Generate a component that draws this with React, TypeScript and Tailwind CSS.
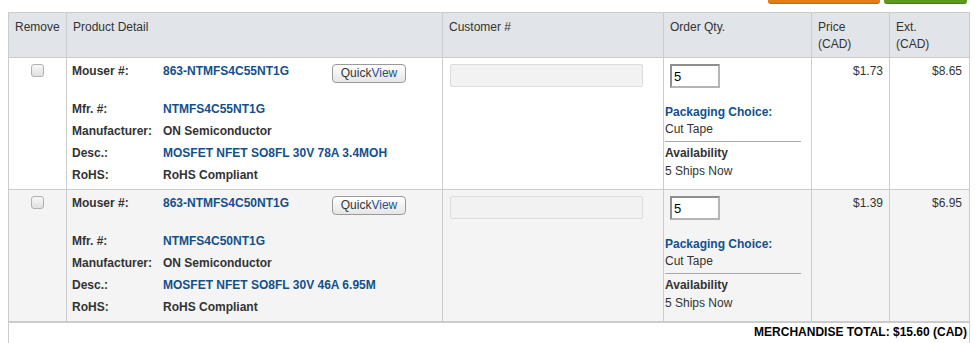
import React from 'react';

interface CartLine {
  mouserNo: string;
  mfrNo: string;
  manufacturer: string;
  desc: string;
  rohs: string;
  qty: string;
  packaging: string;
  availability: string;
  price: string;
  ext: string;
}

const lines: CartLine[] = [
  {
    mouserNo: '863-NTMFS4C55NT1G',
    mfrNo: 'NTMFS4C55NT1G',
    manufacturer: 'ON Semiconductor',
    desc: 'MOSFET NFET SO8FL 30V 78A 3.4MOH',
    rohs: 'RoHS Compliant',
    qty: '5',
    packaging: 'Cut Tape',
    availability: '5 Ships Now',
    price: '$1.73',
    ext: '$8.65',
  },
  {
    mouserNo: '863-NTMFS4C50NT1G',
    mfrNo: 'NTMFS4C50NT1G',
    manufacturer: 'ON Semiconductor',
    desc: 'MOSFET NFET SO8FL 30V 46A 6.95M',
    rohs: 'RoHS Compliant',
    qty: '5',
    packaging: 'Cut Tape',
    availability: '5 Ships Now',
    price: '$1.39',
    ext: '$6.95',
  },
];

function DetailRow({ label, children }: { label: string; children: React.ReactNode }) {
  return (
    <div className="flex items-center h-[22px]">
      <span className="w-[91px] font-bold text-[#333]">{label}</span>
      {children}
    </div>
  );
}

function LineRow({ line, shaded, last }: { line: CartLine; shaded: boolean; last: boolean }) {
  const cell = `align-top border-x border-[#cccccc] ${last ? 'border-b-2' : 'border-b'} border-b-[#cccccc]`;
  return (
    <tr className={shaded ? 'bg-[#f4f4f4]' : 'bg-white'}>
      <td className={`${cell} pt-[6px] text-center`}>
        <input
          type="checkbox"
          className="appearance-none w-[13px] h-[13px] rounded-[3px] border border-[#b0b0b0] bg-gradient-to-b from-[#f8f8f8] to-[#e0e0e0] align-top"
        />
      </td>
      <td className={`${cell} pt-[6px] pb-[3px] pl-[5px]`}>
        <div className="flex items-start h-[34px]">
          <span className="w-[91px] font-bold text-[#333] leading-[14px]">Mouser #:</span>
          <span className="w-[169px] font-bold text-[#12508c] leading-[14px]">{line.mouserNo}</span>
          <button className="h-[19px] w-[74px] rounded-[4px] border border-[#9a9a9a] bg-gradient-to-b from-white to-[#e6e6e6] text-[12px] leading-[17px] text-[#333]">
            Quick<span className="text-[#1d4f91]">View</span>
          </button>
        </div>
        <DetailRow label="Mfr. #:">
          <span className="font-bold text-[#12508c]">{line.mfrNo}</span>
        </DetailRow>
        <DetailRow label="Manufacturer:">
          <span className="font-bold text-[#333]">{line.manufacturer}</span>
        </DetailRow>
        <DetailRow label="Desc.:">
          <span className="font-bold text-[#12508c]">{line.desc}</span>
        </DetailRow>
        <DetailRow label="RoHS:">
          <span className="font-bold text-[#333]">{line.rohs}</span>
        </DetailRow>
      </td>
      <td className={`${cell} pt-[6px] pl-[7px]`}>
        <div className="w-[193px] h-[23px] rounded-[2px] border border-[#dcdcdc] bg-[#f2f2f2]" />
      </td>
      <td className={`${cell} pt-[6px] pl-[1px]`}>
        <input
          readOnly
          value={line.qty}
          className="ml-[5px] w-[50px] h-[24px] border-2 border-t-[#8f8f8f] border-l-[#8f8f8f] border-r-[#b5b5b5] border-b-[#b5b5b5] bg-white px-[2px] text-[13px] text-black outline-none"
        />
        <div className="mt-[16px] leading-[17px] font-bold text-[#12508c]">Packaging Choice:</div>
        <div className="leading-[17px] text-[#333]">{line.packaging}</div>
        <div className="mt-[3px] w-[136px] border-t border-[#aaaaaa]" />
        <div className="mt-[3px] leading-[17px] font-bold text-[#333]">Availability</div>
        <div className="mt-[1px] leading-[17px] text-[#333]">{line.availability}</div>
      </td>
      <td className={`${cell} pt-[6px] pr-[6px] text-right text-[#333] leading-[14px]`}>{line.price}</td>
      <td className={`${cell} pt-[6px] pr-[7px] text-right text-[#333] leading-[14px]`}>{line.ext}</td>
    </tr>
  );
}

export default function App() {
  const head = 'align-top text-left font-normal text-[#333] border border-[#cccccc] px-[6px] pt-[6px] leading-[17px]';
  return (
    <div className="w-[975px] h-[343px] overflow-hidden bg-white text-[12px] font-['Liberation_Sans',Arial,sans-serif]">
      <div className="flex justify-end gap-[4px] pr-[8px]">
        <div className="w-[112px] h-[4px] rounded-b-[3px] bg-[#e57d12] border-b border-[#c8690b]" />
        <div className="w-[83px] h-[4px] rounded-b-[3px] bg-[#5b9a1b] border-b border-[#4a8110]" />
      </div>
      <table className="ml-[8px] mt-[8px] w-[961px] table-fixed border-collapse">
        <colgroup>
          <col className="w-[58px]" />
          <col className="w-[376px]" />
          <col className="w-[221px]" />
          <col className="w-[148px]" />
          <col className="w-[78px]" />
          <col className="w-[80px]" />
        </colgroup>
        <thead>
          <tr className="bg-[#e1e4e8] h-[45px]">
            <th className={head}>Remove</th>
            <th className={head}>Product Detail</th>
            <th className={head}>Customer #</th>
            <th className={head}>Order Qty.</th>
            <th className={head}>
              Price
              <br />
              (CAD)
            </th>
            <th className={head}>
              Ext.
              <br />
              (CAD)
            </th>
          </tr>
        </thead>
        <tbody>
          {lines.map((line, i) => (
            <LineRow key={line.mouserNo} line={line} shaded={i % 2 === 1} last={i === lines.length - 1} />
          ))}
          <tr>
            <td colSpan={6} className="border-x border-[#cccccc] pt-[1px] pr-[2px] pb-[12px] text-right font-bold text-black leading-[17px]">
              MERCHANDISE TOTAL: $15.60 (CAD)
            </td>
          </tr>
        </tbody>
      </table>
    </div>
  );
}
